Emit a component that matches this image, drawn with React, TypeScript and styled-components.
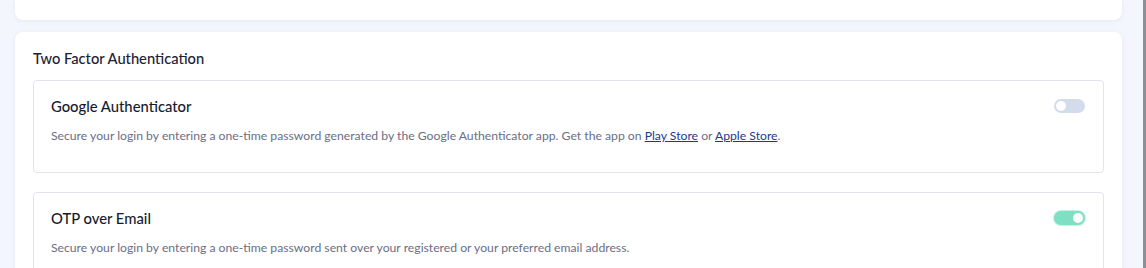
import { FC } from 'react';
import styled, { createGlobalStyle } from 'styled-components';

const GlobalStyle = createGlobalStyle`
  html, body {
    margin: 0;
    padding: 0;
    background: #f3f6fc;
    font-family: Lato, "Noto Sans", sans-serif;
    overflow: hidden;
  }
`;

const Page = styled.div`
  display: flex;
  width: 1146px;
  height: 268px;
  overflow: hidden;
`;

const Main = styled.main`
  flex: 1;
  display: flex;
  flex-direction: column;
  gap: 12px;
  padding: 0 21px 0 15px;
`;

const Scrollbar = styled.div`
  width: 3px;
  background: #8d8f94;
`;

const Card = styled.section<{ $cut?: boolean }>`
  background: #ffffff;
  border-radius: ${({ $cut }) => ($cut ? '0 0 8px 8px' : '8px')};
  box-shadow: 0 1px 4px rgba(60, 80, 140, 0.08);
  height: ${({ $cut }) => ($cut ? '20px' : 'auto')};
  padding: ${({ $cut }) => ($cut ? '0' : '17px 18px 0')};
  flex-shrink: 0;
`;

const CardTitle = styled.h3`
  margin: 0 0 13px;
  font-size: 14.7px;
  line-height: 18px;
  font-weight: 500;
  color: #1d2133;
`;

const OptionList = styled.div`
  display: flex;
  flex-direction: column;
  gap: 19px;
`;

const Option = styled.div`
  border: 1px solid #e1e4ea;
  border-radius: 4px;
  padding: 15px 17px 0;
  height: 93px;
  box-sizing: border-box;
`;

const OptionHead = styled.div`
  display: flex;
  align-items: center;
  justify-content: space-between;
`;

const OptionTitle = styled.h4`
  margin: 0;
  font-size: 14.8px;
  line-height: 20px;
  font-weight: 500;
  color: #171b2e;
`;

const OptionText = styled.p`
  margin: 12px 0 0;
  font-size: 12.2px;
  line-height: 16px;
  color: #6a6e86;
`;

const StoreLink = styled.a`
  color: #1b3a8c;
  text-decoration: underline;
`;

const Track = styled.span<{ $on: boolean }>`
  display: inline-flex;
  align-items: center;
  justify-content: ${({ $on }) => ($on ? 'flex-end' : 'flex-start')};
  width: 31px;
  height: 14px;
  border-radius: 7px;
  padding: 0 2px;
  box-sizing: border-box;
  background: ${({ $on }) => ($on ? '#7de0c2' : '#d4dbeb')};
  box-shadow: ${({ $on }) => ($on ? '0 0 0 1px #c6f2e4' : 'none')};
  margin-right: 1px;
`;

const Knob = styled.span`
  width: 10px;
  height: 10px;
  border-radius: 50%;
  background: #ffffff;
`;

const Toggle: FC<{ on: boolean }> = ({ on }) => (
  <Track $on={on} role="switch" aria-checked={on}>
    <Knob />
  </Track>
);

export default function App() {
  return (
    <>
      <GlobalStyle />
      <Page>
        <Main>
          <Card $cut />
          <Card>
            <CardTitle>Two Factor Authentication</CardTitle>
            <OptionList>
              <Option>
                <OptionHead>
                  <OptionTitle>Google Authenticator</OptionTitle>
                  <Toggle on={false} />
                </OptionHead>
                <OptionText>
                  Secure your login by entering a one-time password generated by the Google Authenticator app. Get the app on{' '}
                  <StoreLink href="#">Play Store</StoreLink> or <StoreLink href="#">Apple Store</StoreLink>.
                </OptionText>
              </Option>
              <Option>
                <OptionHead>
                  <OptionTitle>OTP over Email</OptionTitle>
                  <Toggle on />
                </OptionHead>
                <OptionText>
                  Secure your login by entering a one-time password sent over your registered or your preferred email address.
                </OptionText>
              </Option>
            </OptionList>
          </Card>
        </Main>
        <Scrollbar />
      </Page>
    </>
  );
}
